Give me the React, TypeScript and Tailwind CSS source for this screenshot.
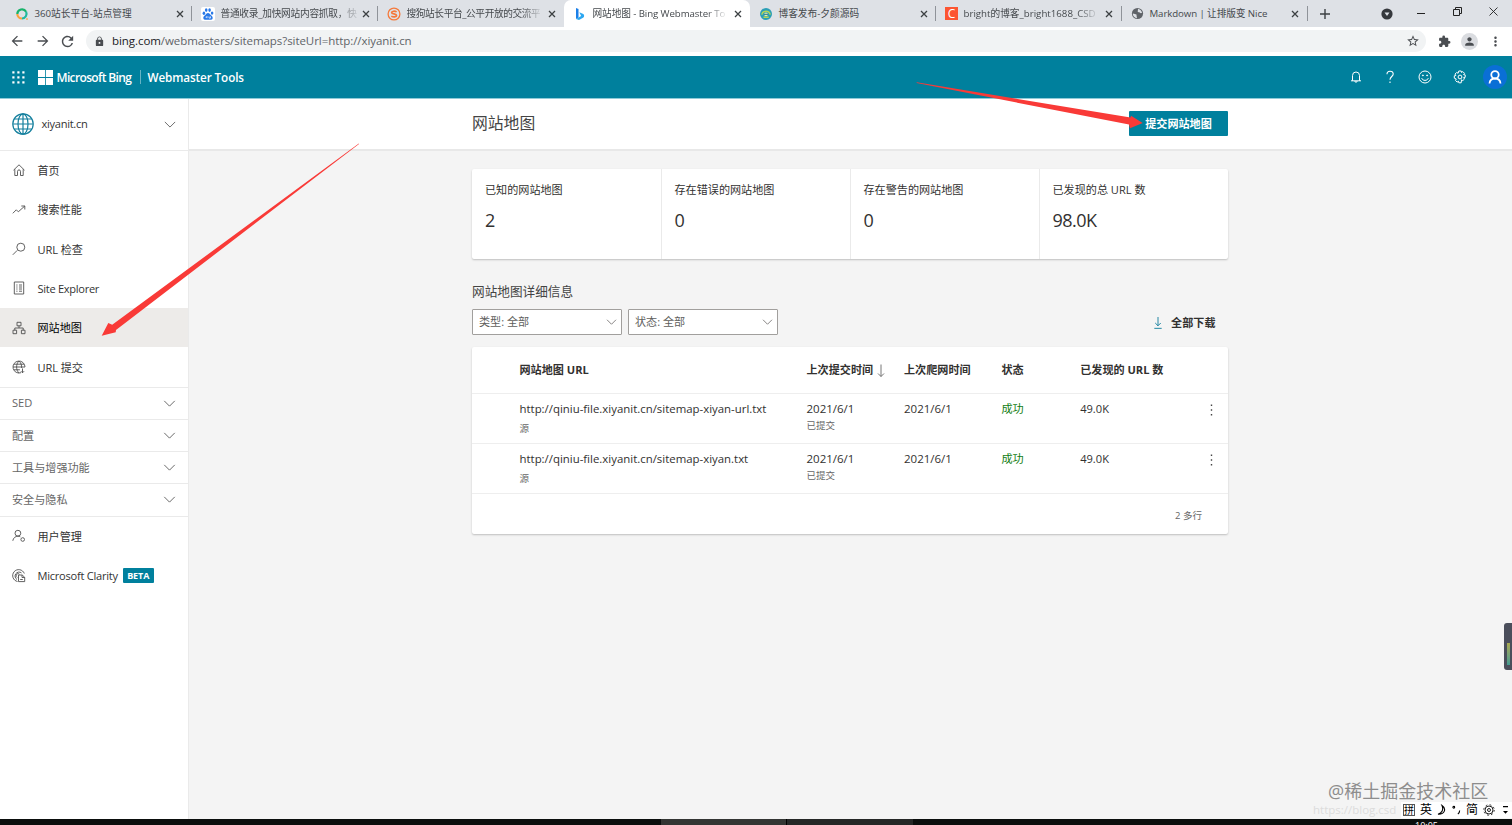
import React from "react";
import { MdLock, MdExtension, MdPerson, MdStarBorder, MdMoreVert, MdRefresh, MdArrowBack, MdArrowForward } from "react-icons/md";

interface Tab {
  title: string;
  icon: React.ReactNode;
  active?: boolean;
  divider?: boolean;
  titleClass?: string;
}

interface NavItem {
  label: string;
  icon: React.ReactNode;
  active?: boolean;
  labelClass?: string;
}

const fade = "[mask-image:linear-gradient(to_right,#000_86%,rgba(0,0,0,0.15)_100%)]";

const tabs: Tab[] = [
  {
    title: "360站长平台-站点管理",
    divider: true,
    icon: (
      <svg viewBox="0 0 14 14" className="h-[14px] w-[14px]" fill="none" strokeWidth="2.2">
        <path d="M2.3 7a4.7 4.7 0 0 1 8.8-2.2" stroke="#19b36b" />
        <path d="M11.1 4.8A4.7 4.7 0 0 1 7 11.5" stroke="#23b9a0" />
        <path d="M7 11.5A4.7 4.7 0 0 1 2.3 7" stroke="#f9a13a" />
        <circle cx="12" cy="12" r="0.6" fill="#f9a13a" stroke="#f9a13a" strokeWidth="0.6" />
      </svg>
    ),
  },
  {
    title: "普通收录_加快网站内容抓取，快",
    divider: true,
    titleClass: `tracking-[-0.25px] ${fade}`,
    icon: (
      <svg viewBox="0 0 14 14" className="h-[14px] w-[14px]">
        <rect width="14" height="14" rx="2" fill="#fff" />
        <g fill="#2878e8">
          <ellipse cx="2.9" cy="6.3" rx="1.3" ry="1.8" />
          <ellipse cx="5.2" cy="3.1" rx="1.3" ry="1.8" />
          <ellipse cx="8.6" cy="3.1" rx="1.3" ry="1.8" />
          <ellipse cx="11.1" cy="6.1" rx="1.3" ry="1.7" />
          <path d="M7 6c1.4 0 2 1.200 3 2.200 1.300 1.200 2 2 1.600 3.300C11 13.300 9 12.700 7 12.700s-4 .6-4.600-1.200C2 10.200 2.700 9.400 4 8.200 5 7.200 5.600 6 7 6z" />
        </g>
        <path d="M6 9v2.200M4.500 10.200h1.500M8 9.400v1.700h1.500V9.400" stroke="#fff" strokeWidth="0.7" fill="none" />
      </svg>
    ),
  },
  {
    title: "搜狗站长平台_公平开放的交流平",
    titleClass: `tracking-[-0.4px] ${fade}`,
    icon: (
      <svg viewBox="0 0 14 14" className="h-[14px] w-[14px]" fill="none">
        <circle cx="7" cy="7" r="5.900" stroke="#f5793b" strokeWidth="1.300" />
        <path d="M9.600 4.900C8 3.900 4.600 3.900 4.600 5.500c0 1.900 5 1 5 3 0 1.700-3.600 1.700-5.300.600" stroke="#f5793b" strokeWidth="1.700" />
      </svg>
    ),
  },
  {
    title: "网站地图 - Bing Webmaster To",
    active: true,
    titleClass: `tracking-[-0.1px] ${fade}`,
    icon: (
      <svg viewBox="0 0 14 14" className="h-[14px] w-[14px]">
        <path d="M3 1l2.500 1v8.400L3 12z" fill="#1b7fe8" />
        <path d="M3 12l2.500-1.600 2.600-1.300L6.300 5.200l4 1.700c1 .5 1.300 3-.2 3.900L6 13z" fill="#2da7f0" />
      </svg>
    ),
  },
  {
    title: "博客发布-夕颜源码",
    divider: true,
    icon: (
      <svg viewBox="0 0 14 14" className="h-[14px] w-[14px]" fill="none">
        <circle cx="7" cy="7" r="6" fill="#2a9fb6" />
        <path d="M2.800 7.600a4.300 4.300 0 0 1 8.400 0M4.500 10.300h5.200" stroke="#b6d455" strokeWidth="1.500" />
        <circle cx="7" cy="7.300" r="1.900" fill="#e9f0b0" />
        <path d="M5 7.300h4" stroke="#176e95" strokeWidth="1" />
      </svg>
    ),
  },
  {
    title: "bright的博客_bright1688_CSD",
    divider: true,
    icon: (
      <span className="flex h-[13px] w-[13px] items-center justify-center bg-[#fc5531] text-[12px] leading-none text-white">C</span>
    ),
    titleClass: fade,
  },
  {
    title: "Markdown | 让排版变 Nice",
    divider: true,
    titleClass: "tracking-[-0.1px]",
    icon: (
      <svg viewBox="0 0 14 14" className="h-[13px] w-[13px]">
        <circle cx="7" cy="7" r="6" fill="#5f6368" />
        <path d="M7.300 1.900c2 .2 4.200 1.800 4.600 4.300-.8.700-1.700.7-2.300 0-.7-.9-2-.5-2.400-1.400-.3-.9.900-1.200.1-2.900zM2 6.900c1.600.200 3 .5 3.800 1.200.8.800-.3 1.500.4 2.300.4.500.1 1.200-.2 1.600C3.500 11.500 1.900 9.400 2 6.900z" fill="#dee1e6" />
      </svg>
    ),
  },
];

const navItems: NavItem[] = [
  {
    label: "首页",
    icon: <path d="M1.500 7.200L7 1.800l5.500 5.400M2.800 6.200v6.300h2.700V8.300c0-1.900 3-1.900 3 0v4.200h2.700V6.200" />,
  },
  { label: "搜索性能", icon: <path d="M.8 10.300l3.500-3.500 2 2L12.800 3M9.300 3h3.500v3.500" /> },
  {
    label: "URL 检查",
    labelClass: "tracking-[-0.1px]",
    icon: <path d="M.8 12.800l4.400-4.400M12.800 5.200a4 4 0 1 1-8 0 4 4 0 0 1 8 0z" />,
  },
  {
    label: "Site Explorer",
    labelClass: "tracking-[-0.3px]",
    icon: <path d="M2.300 1h9.400v12H2.300zM4.300 4h1.200M7 4h3M4.300 6h1.200M7 6h3M4.300 8h1.200M7 8h3M4.300 10.200h1.200M7 10.200h3" />,
  },
  {
    label: "网站地图",
    active: true,
    icon: <path d="M5 1.300h4v3.500H5zM1 9.200h3.600v3.500H1zM9.400 9.200H13v3.500H9.400zM7 4.800V7M2.800 9.200V7h8.400v2.200" />,
  },
  {
    label: "URL 提交",
    labelClass: "tracking-[-0.1px]",
    icon: <path d="M9 12.700A6 6 0 1 1 13 7M1 7h12M1.900 4.200h10.200M1.900 9.800h6M7 1C3.800 4 3.800 10 7 13M7 1c2 1.800 2.800 4.200 2.600 7M10.500 8.500v4.300M8.900 11.200l1.600 1.600 1.600-1.600" />,
  },
];

const groups = ["SED", "配置", "工具与增强功能", "安全与隐私"];

const bottomItems: NavItem[] = [
  {
    label: "用户管理",
    icon: <path d="M8.800 4.200a2.900 2.900 0 1 1-5.800 0 2.900 2.900 0 0 1 5.800 0zM.8 11.800C1.200 8.900 3.500 7.200 5.900 7.200c.9 0 1.700.2 2.400.6M10.700 8.700a1.800 1.800 0 1 1 0 3.600 1.800 1.800 0 0 1 0-3.600z" />,
  },
  {
    label: "Microsoft Clarity",
    labelClass: "tracking-[-0.26px]",
    icon: <path d="M5.500 12.500A6 6 0 1 1 12.300 4.500M5 10.500A4 4 0 1 1 9.500 3.900M5.200 8.500A2 2 0 1 1 7.500 5.300M6.500 6h3.700l2.500 2.300v4.300H6.500zM10 6v2.500h2.700M8.200 10.500h2.600" />,
  },
];

const stats = [
  { label: "已知的网站地图", value: "2" },
  { label: "存在错误的网站地图", value: "0" },
  { label: "存在警告的网站地图", value: "0" },
  { label: "已发现的总 URL 数", value: "98.0K" },
];

const rows = [
  { url: "http://qiniu-file.xiyanit.cn/sitemap-xiyan-url.txt", submitted: "2021/6/1", crawled: "2021/6/1", count: "49.0K" },
  { url: "http://qiniu-file.xiyanit.cn/sitemap-xiyan.txt", submitted: "2021/6/1", crawled: "2021/6/1", count: "49.0K" },
];

function Chevron({ className }: { className?: string }) {
  return (
    <svg viewBox="0 0 14 8" className={className} fill="none" stroke="currentColor" strokeWidth="1">
      <path d="M1 1l6 6 6-6" />
    </svg>
  );
}

function LineIcon({ children }: { children: React.ReactNode }) {
  return (
    <svg viewBox="0 0 14 14" className="h-[14px] w-[14px] shrink-0" fill="none" stroke="#505050" strokeWidth="0.9">
      {children}
    </svg>
  );
}

function TabStrip() {
  return (
    <div className="flex h-[27px] bg-[#dee1e6] pl-[6px] text-[9.700px] text-[#45494d]">
      {tabs.map((tab) => (
        <div
          key={tab.title}
          className={`flex w-[186px] shrink-0 items-center pl-[9px] ${tab.active ? "rounded-t-[7px] bg-white" : ""}`}
        >
          {tab.icon}
          <span className="ml-[5.500px] w-[140.500px] pt-[2px] whitespace-nowrap">
            <span className={`inline-block ${tab.titleClass ?? ""}`}>{tab.title}</span>
          </span>
          <svg viewBox="0 0 8 8" className="ml-[1px] h-[8px] w-[8px] shrink-0" stroke="#3c4043" strokeWidth="1.300">
            <path d="M1 1l6 6M7 1L1 7" />
          </svg>
          {tab.divider && <span className="ml-auto h-[15px] w-px bg-[#8f9399]" />}
        </div>
      ))}
      <div className="flex flex-1 items-center pl-[12px]">
        <svg viewBox="0 0 10 10" className="h-[10px] w-[10px]" stroke="#3c4043" strokeWidth="1.400">
          <path d="M5 0v10M0 5h10" />
        </svg>
        <svg viewBox="0 0 12 12" className="ml-[51px] h-[12px] w-[12px]">
          <circle cx="6" cy="6" r="5.600" fill="#35383c" />
          <path d="M3.500 4.600h5L6 8z" fill="#dee1e6" />
        </svg>
        <svg viewBox="0 0 8 8" className="mb-[4px] ml-[24px] h-[8px] w-[8px]" stroke="#222" strokeWidth="1">
          <path d="M0 5.500h8" />
        </svg>
        <svg viewBox="0 0 9 9" className="mb-[4px] ml-[28px] h-[9px] w-[9px]" fill="none" stroke="#222" strokeWidth="1">
          <path d="M.5 2.500h6v6h-6zM2.500 2.500v-2h6v6h-2" />
        </svg>
        <svg viewBox="0 0 9 9" className="mb-[4px] ml-[27px] h-[9px] w-[9px]" stroke="#222" strokeWidth="0.900">
          <path d="M.5.500l8 8M8.500.500l-8 8" />
        </svg>
      </div>
    </div>
  );
}

function AddressBar() {
  return (
    <div className="flex h-[29px] items-center bg-white pb-[1px] text-[#4a4d51]">
      <MdArrowBack className="ml-[9px] h-[16px] w-[16px]" />
      <MdArrowForward className="ml-[10px] h-[16px] w-[16px]" />
      <MdRefresh className="ml-[8px] h-[17px] w-[17px]" />
      <div className="ml-[10px] flex h-[22px] w-[1340px] items-center rounded-full bg-[#f1f3f4] pr-[6px] pl-[8px]">
        <MdLock className="h-[11px] w-[11px]" />
        <span className="ml-[7px] pb-[1px] text-[11.500px] leading-none tracking-[-0.06px] text-[#5f6368]">
          <span className="text-[#202124]">bing.com</span>/webmasters/sitemaps?siteUrl=http://xiyanit.cn
        </span>
        <MdStarBorder className="ml-auto h-[14px] w-[14px]" />
      </div>
      <MdExtension className="ml-[12px] h-[13px] w-[13px]" />
      <span className="ml-[10px] flex h-[17px] w-[17px] items-center justify-center rounded-full bg-[#dadce0]">
        <MdPerson className="h-[13px] w-[13px]" />
      </span>
      <MdMoreVert className="ml-[10px] h-[15px] w-[15px]" />
    </div>
  );
}

function Header() {
  return (
    <header className="flex h-[43px] items-center border-b border-[#8fcbd8] bg-[#00809d] text-white">
      <svg viewBox="0 0 13 13" className="ml-[12px] h-[13px] w-[13px]" fill="#fff">
        {[0, 5, 10].map((y) => [0, 5, 10].map((x) => <rect key={`${x}-${y}`} x={x + 0.3} y={y + 0.3} width="2.200" height="2.200" />))}
      </svg>
      <svg viewBox="0 0 15 15" className="ml-[13px] h-[15px] w-[15px]" fill="#fff">
        <path d="M0 0h7.100v7.100H0zM7.900 0H15v7.100H7.900zM0 7.900h7.100V15H0zM7.900 7.900H15V15H7.900z" />
      </svg>
      <span className="ml-[3.500px] w-[75px] pt-[2px] text-[12px] font-semibold tracking-[-0.64px] whitespace-nowrap">Microsoft Bing</span>
      <span className="ml-[8px] h-[14px] w-px bg-[#66b3c4]" />
      <span className="ml-[7px] pt-[2px] text-[11.700px] font-semibold tracking-[-0.1px] whitespace-nowrap">Webmaster Tools</span>
      <div className="ml-auto flex items-center pr-[5px]">
        <svg viewBox="0 0 14 14" className="h-[14px] w-[14px]" fill="none" stroke="#fff">
          <path d="M2 10.800h10M3.500 10.800V5.500a3.500 3.500 0 0 1 7 0v5.300M5.800 11a1.200 1.200 0 0 0 2.400 0" />
        </svg>
        <svg viewBox="0 0 14 14" className="ml-[20px] h-[14px] w-[14px]" fill="none" stroke="#fff" strokeWidth="1.100">
          <path d="M4 4.200C4 2 5.400 1.200 7 1.200s3.200.9 3.200 2.800C10.200 6.500 7 6.600 7 9.800M7 11.600V13" />
        </svg>
        <svg viewBox="0 0 14 14" className="ml-[21px] h-[14px] w-[14px]" fill="none" stroke="#fff">
          <circle cx="7" cy="7" r="6" />
          <path d="M3.700 8.200c1 2.900 5.600 2.900 6.600 0" />
          <circle cx="4.900" cy="5.400" r=".5" fill="#fff" />
          <circle cx="9.100" cy="5.400" r=".5" fill="#fff" />
        </svg>
        <svg viewBox="0 0 14 14" className="ml-[21px] h-[14px] w-[14px]" fill="none" stroke="#fff">
          <path d="M5.800 1h2.400l.3 1.500 1.300-.9 1.700 1.700-.9 1.300 1.600.300v2.400l-1.600.3.900 1.400-1.700 1.600-1.300-.8L8.200 12.800H5.800l-.3-1.600-1.400.9-1.600-1.700.8-1.400L1.300 8.200V5.800l1.600-.3-.9-1.400 1.700-1.700 1.400.9z" />
          <circle cx="7" cy="7" r="1.900" />
        </svg>
        <span className="ml-[16px] flex h-[24px] w-[24px] items-center justify-center rounded-full bg-[#0a6fd6]">
          <svg viewBox="0 0 14 14" className="h-[14px] w-[14px]" fill="none" stroke="#fff" strokeWidth="1.800">
            <circle cx="7" cy="4.800" r="3.700" />
            <path d="M1.500 13.500c.3-3 2.500-5 5.500-5s5.200 2 5.500 5" />
          </svg>
        </span>
      </div>
    </header>
  );
}

function NavRow({ item, badge }: { item: NavItem; badge?: string }) {
  return (
    <div className={`flex h-[39.350px] items-center pl-[12px] text-[11.100px] text-[#333] ${item.active ? "bg-[#edebe9] text-black" : ""}`}>
      <LineIcon>{item.icon}</LineIcon>
      <span className={`ml-[11.500px] pt-[2px] whitespace-nowrap ${item.labelClass ?? ""}`}>{item.label}</span>
      {badge && (
        <span className="ml-[5px] flex h-[15px] w-[31px] items-center justify-center rounded-[1px] bg-[#00809d] text-[9px] font-bold tracking-[-0.1px] text-white">
          {badge}
        </span>
      )}
    </div>
  );
}

function Sidebar() {
  return (
    <aside className="w-[188.500px] shrink-0 border-r border-[#eaeaea] bg-white">
      <div className="flex h-[51.500px] items-center border-b border-[#eaeaea] pr-[12px] pl-[12px]">
        <svg viewBox="0 0 22 22" className="h-[22px] w-[22px]" fill="none" stroke="#137f9d" strokeWidth="1.200">
          <circle cx="11" cy="11" r="10.200" />
          <ellipse cx="11" cy="11" rx="5" ry="10.200" />
          <path d="M11 .8v20.400M.8 11h20.400M2.200 6h17.600M2.200 16h17.600" />
        </svg>
        <span className="ml-[7.500px] pt-[1px] text-[11.100px] tracking-[-0.3px] text-[#333]">xiyanit.cn</span>
        <Chevron className="ml-auto h-[7px] w-[12px] text-[#555]" />
      </div>
      <nav>
        {navItems.map((item) => (
          <NavRow key={item.label} item={item} />
        ))}
        {groups.map((group) => (
          <div key={group} className="flex h-[32.250px] items-center border-t border-[#eaeaea] pr-[12px] pl-[12px] text-[11.100px] text-[#666]">
            <span className="pt-[1px]">{group}</span>
            <Chevron className="ml-auto h-[7px] w-[13px] text-[#555]" />
          </div>
        ))}
        <div className="border-t border-[#eaeaea]">
          <NavRow item={bottomItems[0]} />
          <NavRow item={bottomItems[1]} badge="BETA" />
        </div>
      </nav>
    </aside>
  );
}

function FilterSelect({ label }: { label: string }) {
  return (
    <div className="flex h-[26px] w-[150px] items-center justify-between rounded-[1px] border border-[#a19f9d] bg-white pr-[4px] pl-[6px] text-[11.100px] text-[#605e5c]">
      {label}
      <Chevron className="h-[6px] w-[11px] text-[#605e5c]" />
    </div>
  );
}

function SitemapTable() {
  const columns = "grid grid-cols-[287px_97.500px_97.500px_78.700px_1fr] pl-[47.500px]";

  return (
    <div className="h-[187px] rounded-[2px] bg-white text-[11.100px] text-[#323130] shadow-[0_1px_2px_rgba(0,0,0,0.22)]">
      <div className={`${columns} h-[46.500px] items-center border-b border-[#eee] pt-[1px] font-bold`}>
        <span>网站地图 URL</span>
        <span className="flex items-center whitespace-nowrap">
          上次提交时间
          <svg viewBox="0 0 8 13" className="ml-[4px] h-[13px] w-[8px]" fill="none" stroke="#666" strokeWidth="0.900">
            <path d="M4 .5v12M1 9.500l3 3 3-3" />
          </svg>
        </span>
        <span>上次爬网时间</span>
        <span>状态</span>
        <span>已发现的 URL 数</span>
      </div>
      {rows.map((row) => (
        <div key={row.url} className={`${columns} h-[50.400px] border-b border-[#eee] pt-[7.500px] leading-[16px]`}>
          <div>
            <div className="text-[11.420px] whitespace-nowrap">{row.url}</div>
            <div className="mt-[4px] text-[9.500px] text-[#666]">源</div>
          </div>
          <div>
            <div className="text-[11.500px]">{row.submitted}</div>
            <div className="mt-[1px] text-[9.500px] text-[#666]">已提交</div>
          </div>
          <div className="text-[11.500px]">{row.crawled}</div>
          <div className="text-[#107c10]">成功</div>
          <div className="flex justify-between pr-[15px]">
            {row.count}
            <svg viewBox="0 0 3 12" className="mt-[3px] h-[12px] w-[3px]" fill="#444">
              <path d="M.8.500h1.400v1.400H.8zM.8 5.300h1.400v1.400H.8zM.8 10.100h1.400v1.400H.8z" />
            </svg>
          </div>
        </div>
      ))}
      <div className="flex h-[40px] items-center justify-end pt-[4px] pr-[26px] text-[9.500px] text-[#666]">2 多行</div>
    </div>
  );
}

function Content() {
  return (
    <main className="flex-1 bg-[#f4f4f4]">
      <div className="h-[52px] border-b-2 border-[#e8e8e8] bg-white pl-[283.500px]">
        <div className="flex h-[50px] w-[756px] items-center justify-between">
          <h1 className="text-[15.800px] text-[#444]">网站地图</h1>
          <button className="-mt-[1px] h-[25px] w-[99px] rounded-[1px] bg-[#00809d] pt-[1px] text-[11.100px] font-bold text-white">提交网站地图</button>
        </div>
      </div>
      <div className="ml-[283.500px] w-[756px] pt-[18px]">
        <div className="flex h-[90px] rounded-[2px] bg-white shadow-[0_1px_2px_rgba(0,0,0,0.22)]">
          {stats.map((stat) => (
            <div key={stat.label} className="w-[189.250px] border-l border-[#eaeaea] pt-[13px] pl-[12.500px] first:border-l-0 first:pl-[13px]">
              <div className="text-[11.100px] leading-[16px] text-[#323130]">{stat.label}</div>
              <div className="mt-[10px] text-[18px] leading-[24px] tracking-[-0.5px] text-[#323130]">{stat.value}</div>
            </div>
          ))}
        </div>
        <h2 className="mt-[23px] text-[12.650px] leading-[18px] text-[#444]">网站地图详细信息</h2>
        <div className="mt-[9px] flex items-center gap-[6px]">
          <FilterSelect label="类型: 全部" />
          <FilterSelect label="状态: 全部" />
          <span className="ml-auto flex items-center pt-[2px] pr-[12.500px] text-[11.100px] font-semibold text-[#323130]">
            <svg viewBox="0 0 10 13" className="mr-[8px] h-[12px] w-[10px]" fill="none" stroke="#137f9d" strokeWidth="1">
              <path d="M5 0v9.500M2 6.500l3 3 3-3M1 12.300h8" />
            </svg>
            全部下载
          </span>
        </div>
        <div className="mt-[12px]">
          <SitemapTable />
        </div>
      </div>
    </main>
  );
}

function Annotations() {
  return (
    <svg viewBox="0 0 1512 825" className="pointer-events-none absolute inset-0 h-[825px] w-[1512px]" fill="#f93a37">
      <path d="M358.800 143.400L112.200 324.700L108.300 323L101.700 335.700L115.700 332.300L116 330L359 144z" />
      <path d="M916.700 82.300L1130.500 117.600L1131 115.700L1142.700 123L1130 128.300L1129 124.500L916.700 83z" />
    </svg>
  );
}

function ImeBar() {
  return (
    <div className="absolute right-0 bottom-[7px] flex h-[16px] w-[111px] items-center gap-[5px] bg-white pl-[2px] text-[12px] leading-none whitespace-nowrap text-black">
      <span className="flex h-[12px] w-[12px] items-center justify-center border border-[#555] text-[10px]">拼</span>
      <span>英</span>
      <svg viewBox="0 0 10 12" className="h-[12px] w-[10px]" fill="none" stroke="#000" strokeWidth="1.100">
        <path d="M5 1.500c4.500 3 3 9-4 8.700C5 9 6.800 5.500 5 1.500z" />
      </svg>
      <svg viewBox="0 0 10 12" className="h-[12px] w-[9px]" fill="none" stroke="#000" strokeWidth="1.200">
        <circle cx="2" cy="3" r="1" />
        <path d="M8.500 6.500c0 2-.5 3-2 4" />
      </svg>
      <span>简</span>
      <svg viewBox="0 0 12 12" className="h-[12px] w-[12px]" fill="none" stroke="#222">
        <circle cx="6" cy="6" r="4" />
        <circle cx="6" cy="6" r="1.500" />
        <circle cx="6" cy="6" r="5.200" strokeDasharray="1.800 2.280" />
      </svg>
      <svg viewBox="0 0 5 10" className="ml-[3px] h-[10px] w-[5px]" fill="#000">
        <path d="M0 1h5v1.300H0zM0 6h5L2.500 8.800z" />
      </svg>
    </div>
  );
}

export default function App() {
  return (
    <div className="relative flex h-[825px] w-[1512px] flex-col overflow-hidden font-['Open_Sans','Noto_Sans_CJK_SC',sans-serif]">
      <TabStrip />
      <AddressBar />
      <Header />
      <div className="flex h-[720px]">
        <Sidebar />
        <Content />
      </div>
      <footer className="flex h-[6px] bg-[#0b0e0d]">
        <div className="ml-[661px] h-[6px] w-[126px] border-r border-black bg-[#333533]" />
        <div className="h-[6px] w-[126px] bg-[#252726]" />
        <span className="ml-auto pt-[1px] pr-[74px] text-[9px] leading-[12px] text-white">10:05</span>
      </footer>

      <Annotations />

      {/* 侧边性能条 */}
      <div className="absolute top-[623px] right-0 flex h-[47px] w-[8px] items-end rounded-l-[3px] bg-[#4a4e5b] pb-[5px] pl-[3px]">
        <div className="h-[22px] w-[3px] bg-linear-to-b from-[#a9a94e] to-[#3f9a90]" />
      </div>

      <div className="absolute top-[780px] left-[1328px] text-[18px] leading-[22px] whitespace-nowrap text-[#8d8d8d]">@稀土掘金技术社区</div>
      <ImeBar />
      <div className="absolute top-[803px] left-[1313px] text-[11.500px] leading-[14px] whitespace-nowrap text-[#dcdcdc]">https://blog.csd</div>
    </div>
  );
}
